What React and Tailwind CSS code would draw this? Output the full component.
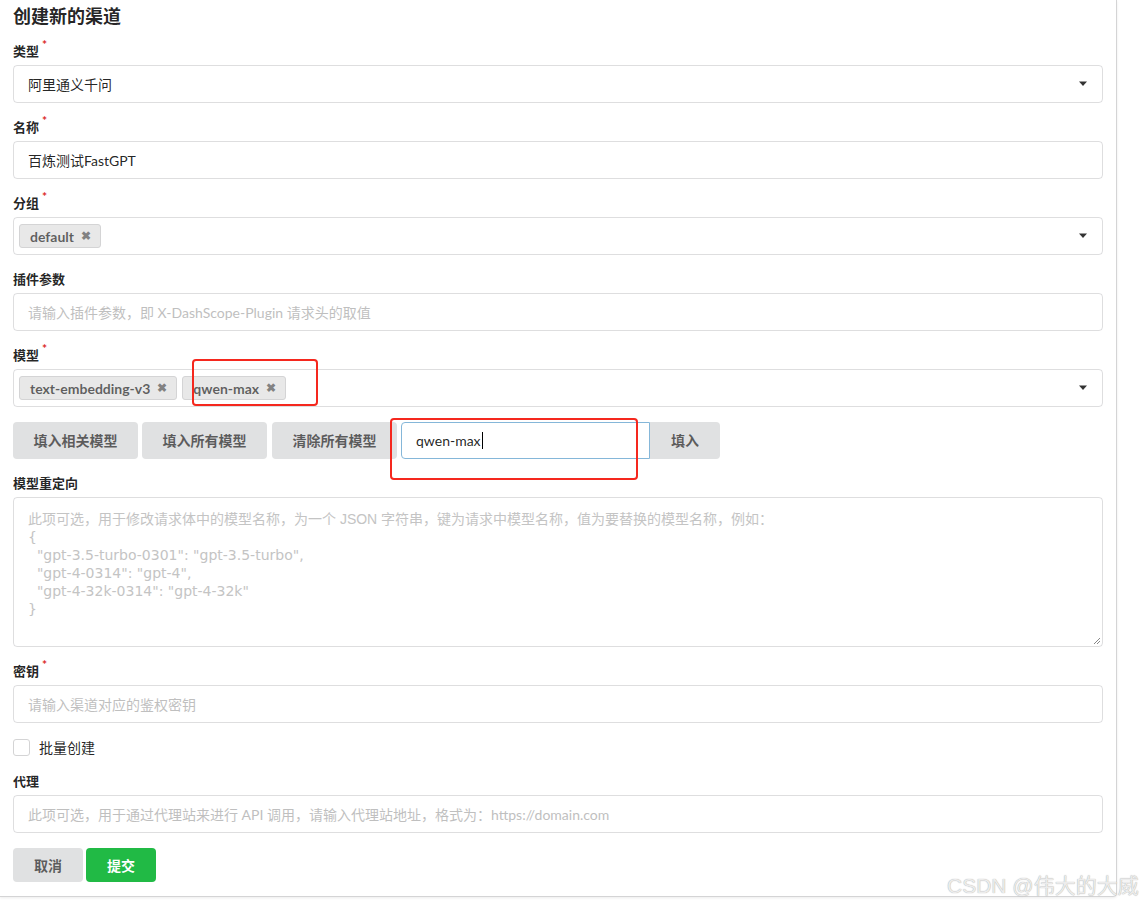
import React from "react";

const font = { fontFamily: "Lato, 'Noto Sans CJK SC', 'Helvetica Neue', Arial, sans-serif" };

function Label({ children, req }) {
  return (
    <div className="text-[13px] font-bold text-[rgba(0,0,0,0.87)] leading-[16px] h-[16px] mb-[6px] flex items-start">
      <span>{children}</span>
      {req && <span className="text-[#db2828] text-[12px] leading-[10px] ml-[3px] -mt-[3px]">*</span>}
    </div>
  );
}

function Caret() {
  return (
    <svg width="10" height="6" viewBox="0 0 10 6" className="shrink-0">
      <path d="M1 0.5 L9 0.5 L5 5 Z" fill="rgba(0,0,0,0.8)" />
    </svg>
  );
}

function Input({ value, placeholder }) {
  return (
    <div className="h-[38px] border border-[rgba(34,36,38,0.15)] rounded-[4px] flex items-center px-[14px] text-[14px] whitespace-nowrap">
      {value ? (
        <span className="text-[rgba(0,0,0,0.87)]">{value}</span>
      ) : (
        <span className="text-[#bfbfbf]">{placeholder}</span>
      )}
    </div>
  );
}

function Tag({ children }) {
  return (
    <span className="inline-flex items-center h-[24px] pl-[10px] pr-[9px] rounded-[3px] bg-[#e8e8e8] border border-[#d4d4d5] text-[14px] font-bold text-[rgba(0,0,0,0.6)] mr-[5px] whitespace-nowrap">
      {children}
      <span className="ml-[7px] text-[12px] text-[rgba(0,0,0,0.45)]">✖</span>
    </span>
  );
}

function Btn({ children, className = "" }) {
  return (
    <button className={"h-[37px] rounded-[4px] bg-[#e0e1e2] text-[rgba(0,0,0,0.6)] text-[14px] font-bold whitespace-nowrap " + className}>
      {children}
    </button>
  );
}

export default function App() {
  return (
    <div className="w-[1143px] h-[908px] bg-white relative overflow-hidden" style={font}>
      <div className="w-[1117px] border-r border-b border-[#d4d4d5] rounded-br-[4px] shadow-[0_1px_3px_rgba(0,0,0,0.08)] px-[13px] pt-[4px] pb-[14px]">
        <div className="text-[18px] font-bold text-[rgba(0,0,0,0.87)] leading-[24px] mb-[15px]">创建新的渠道</div>

        <div className="mb-[16px]">
          <Label req>类型</Label>
          <div className="h-[38px] border border-[rgba(34,36,38,0.15)] rounded-[4px] flex items-center pl-[14px] pr-[14px] text-[14px] text-[rgba(0,0,0,0.87)]">
            <span className="flex-1">阿里通义千问</span>
            <Caret />
          </div>
        </div>

        <div className="mb-[16px]">
          <Label req>名称</Label>
          <Input value="百炼测试FastGPT" />
        </div>

        <div className="mb-[16px]">
          <Label req>分组</Label>
          <div className="h-[38px] border border-[rgba(34,36,38,0.15)] rounded-[4px] flex items-center pl-[5px] pr-[14px]">
            <div className="flex-1 flex items-center">
              <Tag>default</Tag>
            </div>
            <Caret />
          </div>
        </div>

        <div className="mb-[16px]">
          <Label>插件参数</Label>
          <Input placeholder="请输入插件参数，即 X-DashScope-Plugin 请求头的取值" />
        </div>

        <div className="mb-[15px]">
          <Label req>模型</Label>
          <div className="h-[38px] border border-[rgba(34,36,38,0.15)] rounded-[4px] flex items-center pl-[5px] pr-[14px]">
            <div className="flex-1 flex items-center">
              <Tag>text-embedding-v3</Tag>
              <Tag>qwen-max</Tag>
            </div>
            <Caret />
          </div>
        </div>

        <div className="flex items-center mb-[16px]">
          <Btn className="w-[125px] mr-[4px]">填入相关模型</Btn>
          <Btn className="w-[125px] mr-[5px]">填入所有模型</Btn>
          <Btn className="w-[125px] mr-[4px]">清除所有模型</Btn>
          <div className="flex items-center">
            <div className="w-[249px] h-[37px] border border-[#85b7d9] rounded-l-[4px] flex items-center px-[14px] text-[14px] text-[rgba(0,0,0,0.87)]">
              qwen-max<span className="inline-block w-[1px] h-[17px] bg-black ml-[1px]" />
            </div>
            <button className="h-[37px] w-[70px] rounded-r-[4px] bg-[#e0e1e2] text-[rgba(0,0,0,0.6)] text-[14px] font-bold">填入</button>
          </div>
        </div>

        <div className="mb-[16px]">
          <Label>模型重定向</Label>
          <div
            className="relative h-[150px] border border-[rgba(34,36,38,0.15)] rounded-[4px] px-[14px] pt-[12px] text-[14px] leading-[18px] text-[#c4c4c4] whitespace-pre"
            style={{ fontFamily: "'DejaVu Sans', 'Noto Sans CJK SC', sans-serif" }}
          >
            <span style={{ fontFamily: "'Liberation Sans', 'Noto Sans CJK SC', sans-serif" }}>
              此项可选，用于修改请求体中的模型名称，为一个 JSON 字符串，键为请求中模型名称，值为要替换的模型名称，例如：
            </span>
            {"\n{\n  \"gpt-3.5-turbo-0301\": \"gpt-3.5-turbo\",\n  \"gpt-4-0314\": \"gpt-4\",\n  \"gpt-4-32k-0314\": \"gpt-4-32k\"\n}"}
            <svg width="8" height="8" viewBox="0 0 8 8" className="absolute right-[1px] bottom-[1px]">
              <path d="M7 1 L1 7 M7 4 L4 7" stroke="#888" strokeWidth="1" />
            </svg>
          </div>
        </div>

        <div className="mb-[16px]">
          <Label req>密钥</Label>
          <Input placeholder="请输入渠道对应的鉴权密钥" />
        </div>

        <div className="flex items-center mb-[17px] h-[17px]">
          <span className="w-[17px] h-[17px] border border-[#d4d4d5] rounded-[3px] bg-white" />
          <span className="ml-[9px] text-[14px] text-[rgba(0,0,0,0.87)]">批量创建</span>
        </div>

        <div className="mb-[15px]">
          <Label>代理</Label>
          <Input placeholder="此项可选，用于通过代理站来进行 API 调用，请输入代理站地址，格式为：https://domain.com" />
        </div>

        <div className="flex items-center">
          <button className="h-[34px] w-[70px] rounded-[4px] bg-[#e0e1e2] text-[rgba(0,0,0,0.6)] text-[14px] font-bold mr-[3px]">取消</button>
          <button className="h-[34px] w-[70px] rounded-[4px] bg-[#21ba45] text-white text-[14px] font-bold">提交</button>
        </div>
      </div>

      <div className="absolute left-[192px] top-[359px] w-[126px] h-[47px] border-2 border-[#f5281e] rounded-[4px]" />
      <div className="absolute left-[390px] top-[418px] w-[248px] h-[62px] border-2 border-[#f5281e] rounded-[4px]" />

      <div
        className="absolute left-[947px] top-[873px] text-[21px] leading-[26px] text-[#ececec] [text-shadow:0_0_1px_#999] whitespace-nowrap"
        style={{ fontFamily: "'Liberation Sans', 'Noto Sans CJK SC', sans-serif" }}
      >
        CSDN @伟大的大威
      </div>
    </div>
  );
}
